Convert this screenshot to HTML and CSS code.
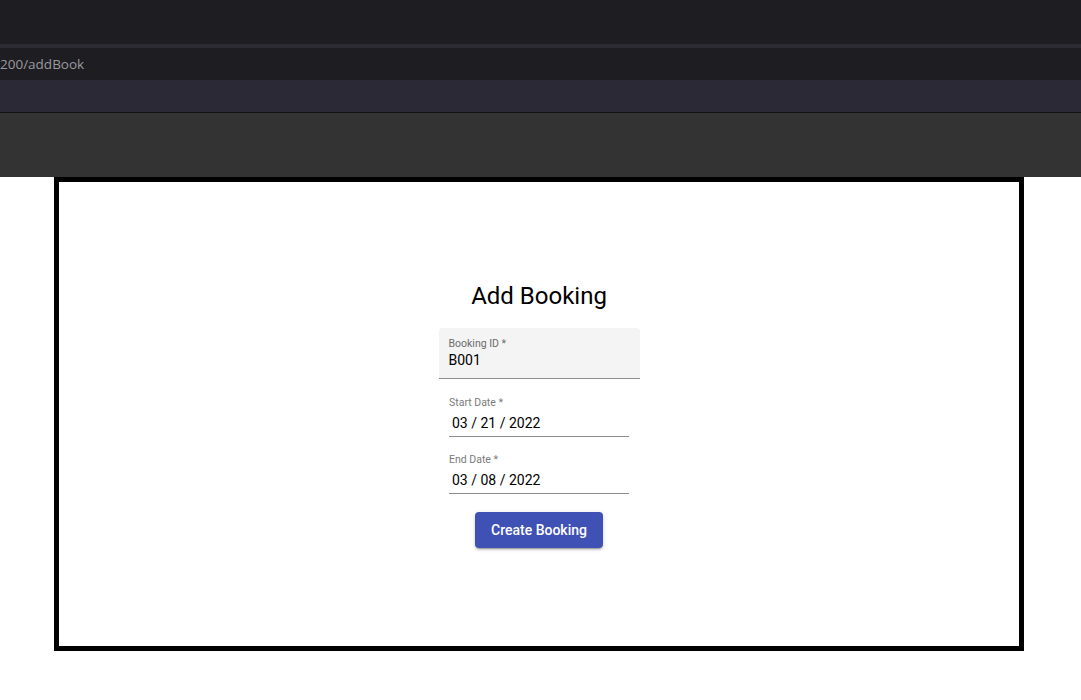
FILE: index.html
```html
<!DOCTYPE html>
<html>
<head>
<meta charset="utf-8">
<link rel="stylesheet" href="styles.css">
</head>
<body>
<div class="chrome">
  <div class="tabbar"></div>
  <div class="sep"></div>
  <div class="urlbar"><span class="url">200/addBook</span></div>
  <div class="bookmarks"></div>
  <div class="toolbar"></div>
</div>
<div class="page">
  <div class="frame">
    <h1 class="title">Add Booking</h1>
    <div class="field fill">
      <div class="label">Booking ID *</div>
      <div class="value">B001</div>
    </div>
    <div class="field legacy">
      <div class="label">Start Date *</div>
      <div class="value date">03 / 21 / 2022</div>
    </div>
    <div class="field legacy">
      <div class="label">End Date *</div>
      <div class="value date">03 / 08 / 2022</div>
    </div>
    <button class="btn">Create Booking</button>
  </div>
</div>
</body>
</html>
```

FILE: styles.css
```css
* { box-sizing: border-box; }
html, body { margin: 0; padding: 0; background: #fff; }
body { font-family: Roboto, "Noto Sans", sans-serif; width: 1081px; height: 700px; overflow: hidden; }
.chrome { display: flex; flex-direction: column; }
.tabbar { height: 44px; background: #1e1d22; }
.sep { height: 4px; background: #2c2b33; }
.urlbar { height: 32px; background: #1e1d22; display: flex; align-items: center; }
.url { font-family: "Open Sans", "Noto Sans", sans-serif; font-size: 13.5px; color: #9b9a9f; margin-left: 0; letter-spacing: 0; }
.bookmarks { height: 33px; background: #2b2935; border-bottom: 1px solid #111113; }
.toolbar { height: 64px; background: #333333; }
.page { padding-left: 54px; }
.frame { width: 970px; height: 474px; border: 5px solid #000; display: flex; flex-direction: column; align-items: center; padding-top: 98px; }
.title { font-size: 24px; font-weight: 400; line-height: 32px; margin: 0 0 16px 0; color: #000; }
.field { display: flex; flex-direction: column; }
.field.fill { width: 201px; height: 51px; background: #f4f4f4; border-radius: 4px 4px 0 0; border-bottom: 1px solid #8c8c8c; padding: 10px 10px 0; }
.field.fill .value { margin-top: 0; }
.field.legacy { width: 180px; height: 47px; border-bottom: 1px solid #8c8c8c; margin-top: 11px; padding-top: 7px; }
.field.legacy + .field.legacy { margin-top: 10px; }
.label { font-size: 10.5px; line-height: 12px; color: #6b6b6b; }
.field.legacy .label { color: #7a7a7a; }
.value { font-size: 14px; line-height: 20px; color: #000; margin-top: 2px; }
.value.date { padding-left: 3px; margin-top: 4px; }
.btn { margin-top: 18px; width: 128px; height: 36px; border: none; border-radius: 4px; background: #3f51b5; color: #fff; font-family: Roboto, sans-serif; font-size: 14px; font-weight: 500; box-shadow: 0 3px 1px -2px rgba(0,0,0,.2), 0 2px 2px 0 rgba(0,0,0,.14), 0 1px 5px 0 rgba(0,0,0,.12); padding: 0; }
```
